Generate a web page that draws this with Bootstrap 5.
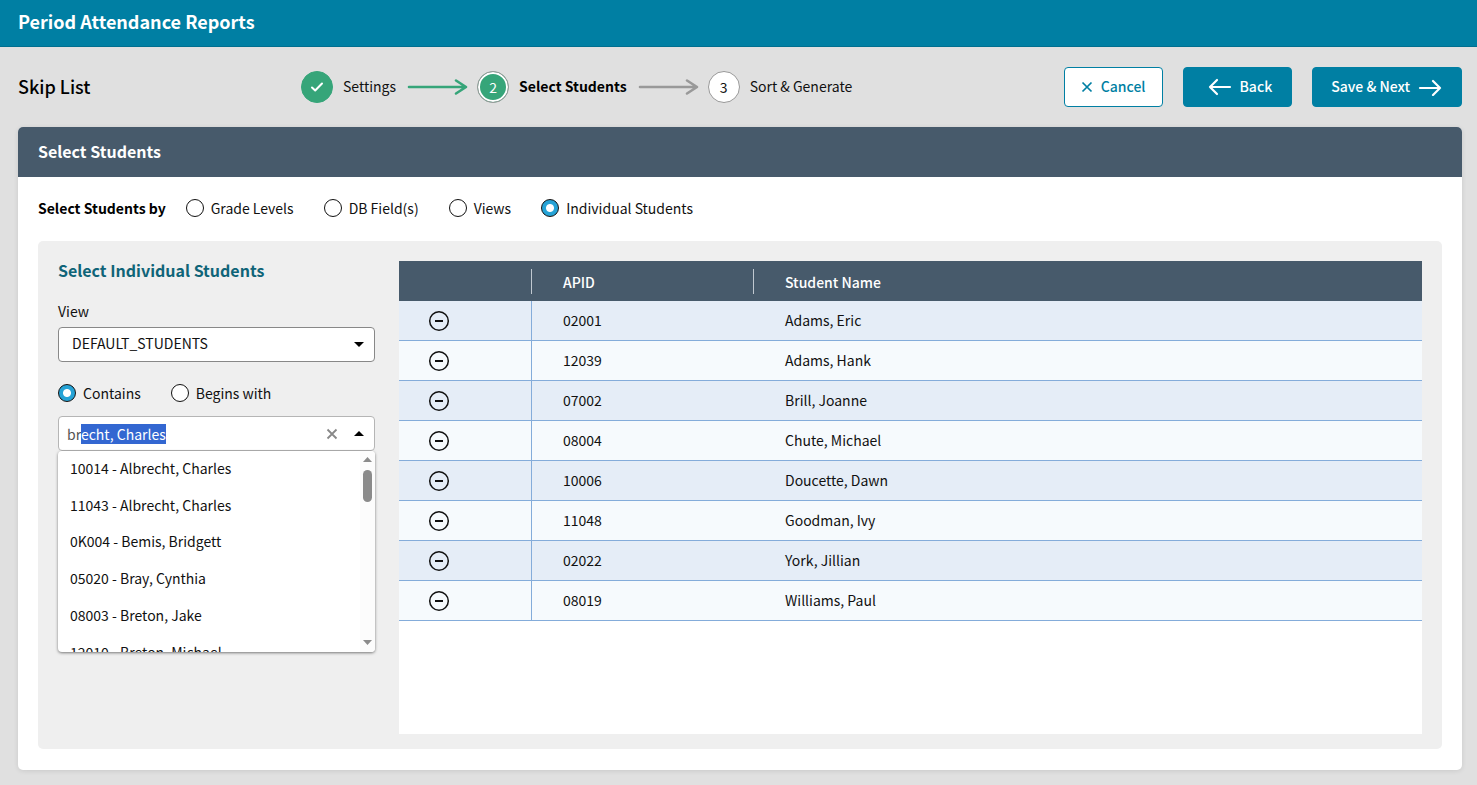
<!DOCTYPE html>
<html lang="en">
<head>
<meta charset="utf-8">
<meta name="viewport" content="width=device-width, initial-scale=1">
<title>Period Attendance Reports</title>
<link href="https://cdn.jsdelivr.net/npm/bootstrap@5.3.0/dist/css/bootstrap.min.css" rel="stylesheet">
<style>
  :root { --teal: #007fa3; --slate: #475a6b; --green: #36a579; }
  body { font-family: "Noto Sans CJK SC", sans-serif; font-size: 14px; line-height: 20px; color: #111; background: #e0e0e0; }
  .fw-mid { font-weight: 500; }
  .topbar { height: 47px; padding: 0 18px 4px; background: var(--teal); border-bottom: 1px solid #006f8f; }
  .topbar h1 { font-size: 18px; line-height: 24px; }
  .page-body { padding: 20px 15px 15px 18px; }
  .toolbar { height: 40px; margin-bottom: 20px; }
  .page-title { width: 283px; font-size: 18px; line-height: 24px; padding-bottom: 3px; color: #000; }
  .step-dot { width: 32px; height: 32px; border: 1px solid #999; background: #fff; margin-right: 10px; }
  .step-dot.done { background: var(--green); border-color: var(--green); }
  .step-dot.current { background: var(--green); color: #fff; box-shadow: inset 0 0 0 2px #fff; }
  .step-arrow { margin: 0 9px 0 11px; }
  .step-text, .tool-btn span { padding-bottom: 2px; }
  .tool-row { gap: 20px; }
  .tool-btn { height: 40px; font-size: 14px; line-height: 20px; font-weight: 500; border-radius: 4px; padding: 0 19px 0 18px;
    --bs-btn-color: #fff; --bs-btn-bg: var(--teal); --bs-btn-border-color: var(--teal);
    --bs-btn-hover-color: #fff; --bs-btn-hover-bg: #006f8f; --bs-btn-hover-border-color: #006f8f; }
  .tool-btn.hollow { --bs-btn-color: var(--teal); --bs-btn-bg: #fff; padding: 0 16px; }
  .tool-btn.back { padding-left: 24px; }
  .main-card { border: 0; border-radius: 5px; box-shadow: 0 1px 5px rgba(0,0,0,.1); }
  .main-card > .card-header { background: var(--slate); color: #fff; border: 0; border-radius: 5px 5px 0 0; padding: 12px 20px 14px; }
  .main-card h2 { font-size: 16px; line-height: 24px; }
  .main-card > .card-body { padding: 21px 20px; }
  .form-check-input.ring { width: 18px; height: 18px; margin: 0 7px 0 0; border: 1px solid #111; float: none; box-shadow: none; background-color: #fff; }
  .form-check-input.ring:checked { border-color: #111; background: radial-gradient(circle, #fff 3.5px, #26a3d6 4.5px); }
  .by-row { margin-bottom: 23px; gap: 30px; }
  .by-label { margin-right: -10px; }
  .panel { background: #efefef; border-radius: 5px; padding: 20px 20px 15px; gap: 24px; }
  .picker { flex: 0 0 317px; }
  .picker h3 { font-size: 16px; line-height: 18px; color: #0f6478; margin-bottom: 22px; }
  .view-label { margin-bottom: 6px; }
  .view-select { height: 35px; border: 1px solid #888; border-radius: 4px; font-size: 14px; line-height: 20px; color: #111; padding: 5px 36px 8px 13px;
    background: #fff url("data:image/svg+xml,%3Csvg xmlns='http://www.w3.org/2000/svg' viewBox='0 0 10 5'%3E%3Cpath d='M0 0h10L5 5z'/%3E%3C/svg%3E") no-repeat right 10px center / 10px 5px; }
  .match-row { margin: 21px 0 13px; gap: 30px; }
  .search-box { height: 35px; border: 1px solid #b5b5b5; border-radius: 4px; background: #fff; padding: 0 10px 0 8px; }
  .search-box input { min-width: 0; border: 0; outline: 0; padding: 0; color: #555; background: transparent; }
  .search-box input::selection { background: #3367d1; color: #fff; }
  .bare { border: 0; background: none; padding: 0; line-height: 0; }
  .results { top: 35px; height: 201px; background: #fff; border-radius: 4px; box-shadow: 0 1px 3px rgba(0,0,0,.5); overflow: hidden; }
  .results li { padding: 7px 12px 9px; height: 37px; color: #111; }
  .results li:nth-child(2) { height: 36px; }
  .scroll-track { width: 15px; background: #fcfcfc; padding: 6px 0 7px; }
  .scroll-thumb { width: 9px; height: 32px; border-radius: 5px; background: #8b8b8b; margin: 8px 0 auto; }
  .grid-box { background: #fff; min-height: 473px; }
  .students { table-layout: fixed; border-collapse: separate; border-spacing: 0; color: #111; }
  .students th { background: var(--slate); color: #fff; font-weight: 500; height: 40px; padding: 2px 30px 0 31px; }
  .students th:not(:last-child) { background: linear-gradient(#c0c8d0, #c0c8d0) no-repeat right 8px / 1px 25px var(--slate); }
  .students td { height: 40px; border-bottom: 1px solid #84acda; padding: 0 31px 2px; }
  .students td:first-child { border-right: 1px solid #84acda; padding: 0 0 0 29px; line-height: 0; }
  .students tr:nth-child(odd) td { background: #e5edf7; }
  .students tr:nth-child(even) td { background: #f6fafd; }
  .c-remove { width: 133px; }
  .c-id { width: 222px; }
</style>
</head>
<body class="min-vh-100 d-flex flex-column">
<header class="topbar d-flex align-items-center text-white"><h1 class="m-0 fw-bold">Period Attendance Reports</h1></header>
<div class="page-body d-flex flex-column flex-grow-1">
  <div class="toolbar d-flex align-items-center">
    <h2 class="page-title fw-mid m-0">Skip List</h2>
    <div class="d-flex align-items-center text-nowrap">
      <span class="step-dot done rounded-circle d-flex align-items-center justify-content-center"><svg width="14" height="12" viewBox="0 0 14 12" fill="none" stroke="#fff" stroke-width="2" stroke-linecap="round" stroke-linejoin="round"><path d="M2 6.5 5.2 9.5 12 2.5"/></svg></span>
      <span class="step-text">Settings</span>
      <svg class="step-arrow" width="61" height="18" viewBox="0 0 61 18" fill="none" stroke="#36a579" stroke-width="2.6" stroke-linecap="round" stroke-linejoin="round"><path d="M2 9H58M49 2.500 59 9 49 15.500"/></svg>
      <span class="step-dot current rounded-circle d-flex align-items-center justify-content-center">2</span>
      <span class="step-text fw-bold text-black">Select Students</span>
      <svg class="step-arrow" width="61" height="18" viewBox="0 0 61 18" fill="none" stroke="#999" stroke-width="2.6" stroke-linecap="round" stroke-linejoin="round"><path d="M2 9H58M49 2.500 59 9 49 15.500"/></svg>
      <span class="step-dot rounded-circle d-flex align-items-center justify-content-center">3</span>
      <span class="step-text">Sort &amp; Generate</span>
    </div>
    <div class="tool-row d-flex ms-auto text-nowrap">
      <button type="button" class="btn tool-btn hollow d-flex align-items-center"><svg class="me-2" width="12" height="12" viewBox="0 0 12 12" fill="none" stroke="#007fa3" stroke-width="1.7"><path d="M1.5 1.5l9 9M10.5 1.5l-9 9"/></svg><span>Cancel</span></button>
      <button type="button" class="btn tool-btn back d-flex align-items-center"><svg class="me-2" width="24" height="18" viewBox="0 0 24 18" fill="none" stroke="#fff" stroke-width="2.2" stroke-linecap="round" stroke-linejoin="round"><path d="M22 9H2M9 2 2 9l7 7"/></svg><span>Back</span></button>
      <button type="button" class="btn tool-btn d-flex align-items-center"><span>Save &amp; Next</span><svg class="ms-2" width="24" height="18" viewBox="0 0 24 18" fill="none" stroke="#fff" stroke-width="2.2" stroke-linecap="round" stroke-linejoin="round"><path d="M2 10h20M15 3l7 7-7 7"/></svg></button>
    </div>
  </div>
  <main class="card main-card flex-grow-1">
    <div class="card-header"><h2 class="m-0 fw-bold">Select Students</h2></div>
    <div class="card-body d-flex flex-column">
      <div class="by-row d-flex align-items-center" role="radiogroup" aria-labelledby="by">
        <span id="by" class="fw-bold text-black by-label">Select Students by</span>
        <span class="d-flex align-items-center"><input class="form-check-input ring" type="radio" name="by" id="by1"><label for="by1">Grade Levels</label></span>
        <span class="d-flex align-items-center"><input class="form-check-input ring" type="radio" name="by" id="by2"><label for="by2">DB Field(s)</label></span>
        <span class="d-flex align-items-center"><input class="form-check-input ring" type="radio" name="by" id="by3"><label for="by3">Views</label></span>
        <span class="d-flex align-items-center"><input class="form-check-input ring" type="radio" name="by" id="by4" checked><label for="by4">Individual Students</label></span>
      </div>
      <section class="panel d-flex flex-grow-1">
        <div class="picker">
          <h3 class="fw-bold">Select Individual Students</h3>
          <label class="view-label d-block" for="view">View</label>
          <select id="view" class="form-select view-select"><option>DEFAULT_STUDENTS</option></select>
          <div class="match-row d-flex align-items-center">
            <span class="d-flex align-items-center"><input class="form-check-input ring" type="radio" name="match" id="m1" checked><label for="m1">Contains</label></span>
            <span class="d-flex align-items-center"><input class="form-check-input ring" type="radio" name="match" id="m2"><label for="m2">Begins with</label></span>
          </div>
          <div class="position-relative">
            <div class="search-box d-flex align-items-center">
              <input id="find" class="flex-grow-1" type="text" value="brecht, Charles" aria-label="Student" autocomplete="off" spellcheck="false">
              <button type="button" class="bare" aria-label="Clear"><svg width="12" height="12" viewBox="0 0 12 12" fill="none" stroke="#888" stroke-width="1.8"><path d="M1.5 1.5l9 9M10.5 1.5l-9 9"/></svg></button>
              <button type="button" class="bare ms-3" aria-label="Close list"><svg width="10" height="5" viewBox="0 0 10 5"><path d="M0 5h10L5 0z"/></svg></button>
            </div>
            <div class="results position-absolute w-100 d-flex">
              <ul class="list-unstyled m-0 flex-grow-1">
                <li>10014 - Albrecht, Charles</li>
                <li>11043 - Albrecht, Charles</li>
                <li>0K004 - Bemis, Bridgett</li>
                <li>05020 - Bray, Cynthia</li>
                <li>08003 - Breton, Jake</li>
                <li>12010 - Breton, Michael</li>
              </ul>
              <div class="scroll-track d-flex flex-column align-items-center">
                <svg width="9" height="5" viewBox="0 0 9 5" fill="#8b8b8b"><path d="M0 5h9L4.5 0z"/></svg>
                <div class="scroll-thumb"></div>
                <svg width="9" height="5" viewBox="0 0 9 5" fill="#8b8b8b"><path d="M0 0h9L4.5 5z"/></svg>
              </div>
            </div>
          </div>
        </div>
        <div class="grid-box flex-grow-1">
          <table class="students w-100">
            <colgroup><col class="c-remove"><col class="c-id"><col></colgroup>
            <thead><tr><th></th><th>APID</th><th>Student Name</th></tr></thead>
            <tbody id="rows"></tbody>
          </table>
        </div>
      </section>
    </div>
  </main>
</div>
<script src="https://cdn.jsdelivr.net/npm/bootstrap@5.3.0/dist/js/bootstrap.bundle.min.js"></script>
<script>
  const students = [['02001','Adams, Eric'],['12039','Adams, Hank'],['07002','Brill, Joanne'],['08004','Chute, Michael'],
    ['10006','Doucette, Dawn'],['11048','Goodman, Ivy'],['02022','York, Jillian'],['08019','Williams, Paul']];
  document.getElementById('rows').innerHTML = students.map(([id, name]) =>
    `<tr><td><button type="button" class="bare" aria-label="Remove ${name}"><svg width="22" height="22" viewBox="0 0 22 22" fill="none" stroke="#111"><circle cx="11" cy="11" r="9.3" stroke-width="1.5"/><path d="M7 11h8" stroke-width="2"/></svg></button></td><td>${id}</td><td>${name}</td></tr>`).join('');
  const find = document.getElementById('find');
  find.focus();
  find.setSelectionRange(2, find.value.length);
</script>
</body>
</html>
